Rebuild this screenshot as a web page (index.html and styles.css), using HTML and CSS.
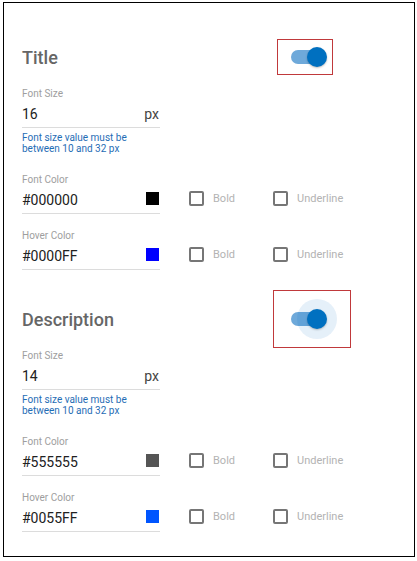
FILE: index.html
```html
<!DOCTYPE html>
<html lang="en">
<head>
  <meta charset="UTF-8" />
  <meta name="viewport" content="width=device-width, initial-scale=1.0"/>
  <title>Text Settings</title>
  <link rel="stylesheet" href="styles.css">
</head>
<body>
  <div class="panel">
    <section class="group">
      <div class="group-head">
        <h2>Title</h2>
        <div class="toggle-frame">
          <span class="switch"><span class="track"></span><span class="thumb"></span></span>
        </div>
      </div>
      <div class="field size-field">
        <div class="field-label">Font Size</div>
        <div class="input-row"><span class="value">16</span><span class="unit">px</span></div>
      </div>
      <p class="hint">Font size value must be<br>between 10 and 32 px</p>
      <div class="color-row">
        <div class="field">
          <div class="field-label">Font Color</div>
          <div class="input-row"><span class="value">#000000</span><span class="swatch black"></span></div>
        </div>
        <label class="check"><span class="box"></span>Bold</label>
        <label class="check"><span class="box"></span>Underline</label>
      </div>
      <div class="color-row">
        <div class="field">
          <div class="field-label">Hover Color</div>
          <div class="input-row"><span class="value">#0000FF</span><span class="swatch blue"></span></div>
        </div>
        <label class="check"><span class="box"></span>Bold</label>
        <label class="check"><span class="box"></span>Underline</label>
      </div>
    </section>

    <section class="group second">
      <div class="group-head">
        <h2>Description</h2>
        <div class="toggle-frame focused">
          <span class="switch"><span class="track"></span><span class="thumb"></span></span>
        </div>
      </div>
      <div class="field size-field">
        <div class="field-label">Font Size</div>
        <div class="input-row"><span class="value">14</span><span class="unit">px</span></div>
      </div>
      <p class="hint">Font size value must be<br>between 10 and 32 px</p>
      <div class="color-row">
        <div class="field">
          <div class="field-label">Font Color</div>
          <div class="input-row"><span class="value">#555555</span><span class="swatch grey"></span></div>
        </div>
        <label class="check"><span class="box"></span>Bold</label>
        <label class="check"><span class="box"></span>Underline</label>
      </div>
      <div class="color-row">
        <div class="field">
          <div class="field-label">Hover Color</div>
          <div class="input-row"><span class="value">#0055FF</span><span class="swatch azure"></span></div>
        </div>
        <label class="check"><span class="box"></span>Bold</label>
        <label class="check"><span class="box"></span>Underline</label>
      </div>
    </section>
  </div>
</body>
</html>
```

FILE: styles.css
```css
:root {
  --primary: #0070c0;
  --label: #9e9e9e;
  --text: #212121;
  --line: #dcdcdc;
  --hint: #1f6db5;
  --frame: #c0393b;
}

* {
  box-sizing: border-box;
  margin: 0;
  padding: 0;
}

body {
  font-family: Roboto, "Liberation Sans", sans-serif;
  background: #fff;
  color: var(--text);
  padding: 2px 0 0 3px;
}

.panel {
  width: 412px;
  height: 555px;
  border: 1px solid #000;
  padding: 36px 0 0 18px;
}

.group.second {
  margin-top: 31px;
}

.group-head {
  display: flex;
  align-items: center;
  height: 36px;
}

.group-head h2 {
  flex: none;
  width: 255px;
  font-size: 18px;
  font-weight: 500;
  color: #666;
}

.toggle-frame {
  flex: none;
  width: 56px;
  height: 36px;
  border: 1px solid var(--frame);
  display: flex;
  align-items: center;
  padding-left: 13px;
}

.toggle-frame.focused {
  width: 78px;
  height: 58px;
  margin-left: -4px;
  padding-left: 17px;
}

.switch {
  position: relative;
  display: block;
  width: 36px;
  height: 20px;
}

.track {
  position: absolute;
  left: 0;
  top: 3px;
  width: 34px;
  height: 14px;
  border-radius: 7px;
  background: #6ea9da;
}

.thumb {
  position: absolute;
  left: 16px;
  top: 0;
  width: 20px;
  height: 20px;
  border-radius: 50%;
  background: var(--primary);
  box-shadow: 0 1px 2px rgba(0, 0, 0, 0.25);
}

.focused .thumb {
  box-shadow: 0 0 0 10px rgba(0, 112, 192, 0.1), 0 1px 2px rgba(0, 0, 0, 0.25);
}

.field {
  flex: none;
  width: 138px;
}

.size-field {
  margin-top: 13px;
}

.field-label {
  font-size: 10px;
  line-height: 12px;
  color: var(--label);
  margin-bottom: 5px;
}

.input-row {
  display: flex;
  align-items: center;
  justify-content: space-between;
  height: 23px;
  padding-bottom: 4px;
  border-bottom: 1px solid var(--line);
}

.value {
  font-size: 14px;
  line-height: 18px;
  color: var(--text);
}

.unit {
  font-size: 14px;
  color: #444;
  margin-right: 1px;
}

.swatch {
  width: 13px;
  height: 13px;
  margin-right: 1px;
  margin-top: -3px;
}

.swatch.black { background: #000000; }
.swatch.blue { background: #0000ff; }
.swatch.grey { background: #555555; }
.swatch.azure { background: #0055ff; }

.hint {
  margin-top: 4px;
  font-size: 10px;
  line-height: 11px;
  color: var(--hint);
}

.color-row {
  display: flex;
  align-items: flex-end;
  margin-top: 16px;
}

.hint + .color-row {
  margin-top: 20px;
}

.check {
  flex: none;
  display: flex;
  align-items: center;
  gap: 9px;
  width: 84px;
  margin-bottom: 8px;
  font-size: 11px;
  color: #b3b3b3;
}

.check:first-of-type {
  margin-left: 29px;
}

.box {
  width: 15px;
  height: 15px;
  border: 2px solid #767676;
  border-radius: 2px;
}
```
